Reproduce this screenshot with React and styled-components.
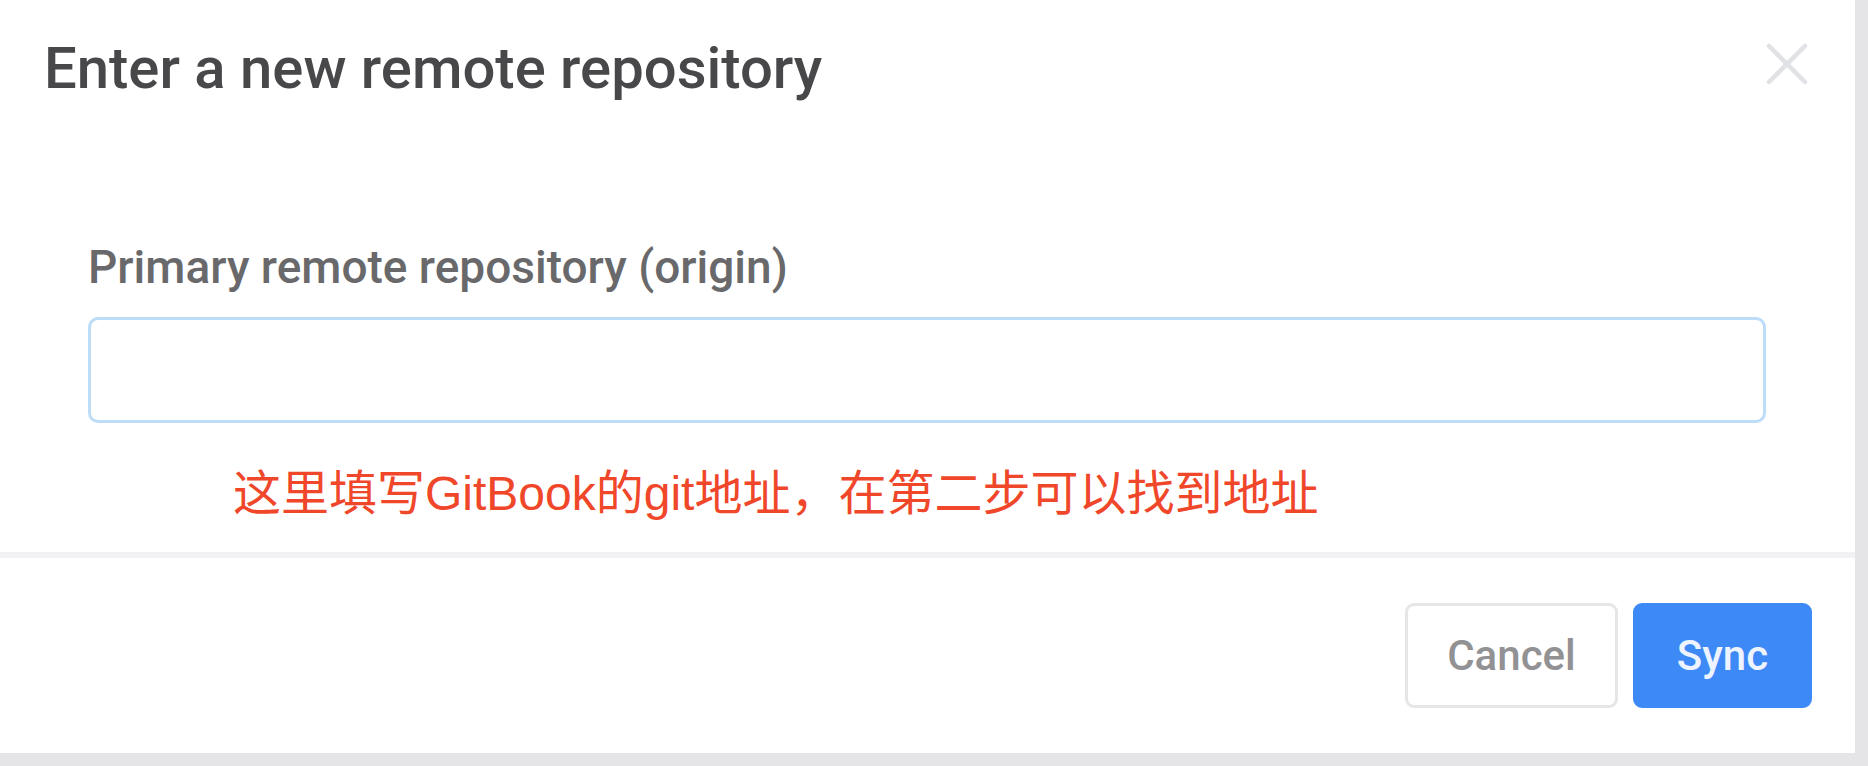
import React from "react";
import styled, { createGlobalStyle } from "styled-components";

const Global = createGlobalStyle`
  html, body { margin: 0; padding: 0; background: #e5e5e8; }
  body { font-family: Roboto, "Liberation Sans", Arial, sans-serif; }
  * { box-sizing: border-box; }
`;

const Dialog = styled.div`
  width: 1855px;
  height: 753px;
  background: #ffffff;
  display: flex;
  flex-direction: column;
`;

const Header = styled.div`
  height: 136px;
  display: flex;
  align-items: center;
  justify-content: space-between;
  padding: 0 46px 0 44px;
`;

const Title = styled.h2`
  margin: 0;
  font-family: Roboto, "Liberation Sans", sans-serif;
  font-weight: 500;
  font-size: 58px;
  line-height: 1;
  color: #48484a;
  letter-spacing: 0;
`;

const CloseButton = styled.button`
  border: 0;
  background: none;
  padding: 0;
  width: 44px;
  height: 44px;
  margin-top: -8px;
  display: flex;
  align-items: center;
  justify-content: center;
  cursor: pointer;
`;

const Body = styled.div`
  padding: 105px 89px 0 88px;
  display: flex;
  flex-direction: column;
`;

const Label = styled.label`
  font-family: Roboto, "Liberation Sans", sans-serif;
  font-weight: 500;
  font-size: 46px;
  line-height: 52px;
  color: #69696b;
`;

const Input = styled.input`
  margin-top: 24px;
  height: 106px;
  width: 100%;
  border: 3px solid #bcdcf7;
  border-radius: 10px;
  background: #fff;
  outline: none;
  font-size: 36px;
  padding: 0 24px;
`;

const Hint = styled.div`
  margin: 43px 0 0 145px;
  font-family: "Liberation Sans", "Noto Sans CJK SC", sans-serif;
  font-size: 48px;
  line-height: 56px;
  color: #f0472a;
`;

const Divider = styled.div`
  margin-top: 30px;
  height: 6px;
  background: #f2f2f4;
`;

const Footer = styled.div`
  flex: 1;
  display: flex;
  justify-content: flex-end;
  align-items: flex-start;
  gap: 15px;
  padding: 45px 43px 0 0;
`;

const Button = styled.button`
  height: 105px;
  width: ${(p) => p.$w}px;
  border-radius: 9px;
  font-family: Roboto, "Liberation Sans", sans-serif;
  font-weight: 500;
  font-size: 42px;
  cursor: pointer;
  border: 3px solid ${(p) => (p.$primary ? "#3d89f6" : "#e6e6e8")};
  background: ${(p) => (p.$primary ? "#3d89f6" : "#ffffff")};
  color: ${(p) => (p.$primary ? "#eef4ff" : "#929294")};
`;

export default function App() {
  return (
    <>
      <Global />
      <Dialog>
        <Header>
          <Title>Enter a new remote repository</Title>
          <CloseButton aria-label="Close">
            <svg width="44" height="44" viewBox="0 0 44 44">
              <path d="M4 4 L40 40 M40 4 L4 40" stroke="#e1e2e6" strokeWidth="4.5" strokeLinecap="round" />
            </svg>
          </CloseButton>
        </Header>
        <Body>
          <Label>Primary remote repository (origin)</Label>
          <Input />
          <Hint>这里填写GitBook的git地址，在第二步可以找到地址</Hint>
        </Body>
        <Divider />
        <Footer>
          <Button $w={213}>Cancel</Button>
          <Button $w={179} $primary>Sync</Button>
        </Footer>
      </Dialog>
    </>
  );
}
